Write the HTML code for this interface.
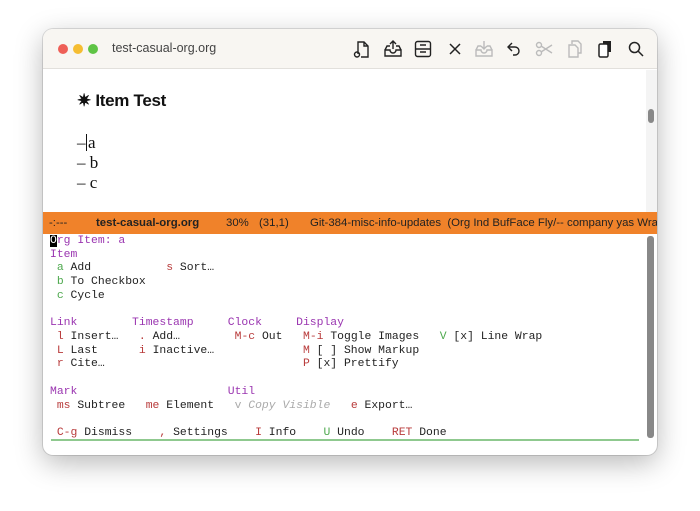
<!DOCTYPE html>
<html><head><style>
*{margin:0;padding:0;box-sizing:border-box}
body{width:700px;height:511px;background:#fff;position:relative;overflow:hidden;font-family:"Liberation Sans",sans-serif}
.win{position:absolute;left:43px;top:29px;width:614px;height:426px;border-radius:10px;background:#fff;box-shadow:0 8px 28px rgba(0,0,0,.28),0 0 0 1px rgba(0,0,0,.12);overflow:hidden}
.tb{position:absolute;left:0;top:0;width:614px;height:40px;background:#f8f6f2;border-bottom:1px solid #e2e0dc}
.dot{position:absolute;top:15px;width:10px;height:10px;border-radius:50%}
.title{position:absolute;left:69px;top:12px;font-size:12.5px;color:#444}
.ic{position:absolute;top:10px}
.mono{font-family:"Liberation Mono",monospace;font-size:11.4px;line-height:13.72px;white-space:pre;color:#222}
.p{color:#9a35b0}.r{color:#b83a3a}.g{color:#4da84d}.gr{color:#aaa}
.ml span{position:absolute;top:0}
</style></head><body>
<div class="win">
<div class="tb">
<div class="dot" style="left:15px;background:#ee5f57"></div>
<div class="dot" style="left:30px;background:#f5bd32"></div>
<div class="dot" style="left:45px;background:#5fc445"></div>
<div class="title">test-casual-org.org</div>
<svg class="ic" style="left:309px" width="20" height="20" viewBox="0 0 20 20" fill="none" stroke="#222" stroke-width="1.4"><path d="M6 15V3h6l4 4v11H9"/><path d="M12 3v4h4"/><circle cx="5" cy="15.5" r="2.5"/></svg>
<svg class="ic" style="left:340px" width="20" height="20" viewBox="0 0 20 20" fill="none" stroke="#222" stroke-width="1.4"><path d="M2 11l2-4h3M18 11l-2-4h-3M2 11v6h16v-6h-5a3 3 0 0 1-6 0z"/><path d="M10 10V2M7 5l3-3 3 3"/></svg>
<svg class="ic" style="left:370px" width="20" height="20" viewBox="0 0 20 20" fill="none" stroke="#222" stroke-width="1.4"><rect x="2.5" y="2.5" width="15" height="15" rx="2"/><path d="M2.5 10h15M7 6h6M7 13h6"/></svg>
<svg class="ic" style="left:402px" width="20" height="20" viewBox="0 0 20 20" fill="none" stroke="#222" stroke-width="1.5"><path d="M5 5l10 10M15 5L5 15"/></svg>
<svg class="ic" style="left:431px" width="20" height="20" viewBox="0 0 20 20" fill="none" stroke="#bbb" stroke-width="1.4"><path d="M2 11l2-4h3M18 11l-2-4h-3M2 11v6h16v-6h-5a3 3 0 0 1-6 0z"/><path d="M10 2v8M7 7l3 3 3-3"/></svg>
<svg class="ic" style="left:461px" width="20" height="20" viewBox="0 0 20 20" fill="none" stroke="#222" stroke-width="1.4"><path d="M8 4L4 8l4 4"/><path d="M4 8h7a4 4 0 0 1 0 8H9"/></svg>
<svg class="ic" style="left:491px" width="20" height="20" viewBox="0 0 20 20" fill="none" stroke="#bbb" stroke-width="1.4"><circle cx="5" cy="6" r="2.5"/><circle cx="5" cy="14" r="2.5"/><path d="M7 7l11 7M7 13l11-7"/></svg>
<svg class="ic" style="left:522px" width="20" height="20" viewBox="0 0 20 20" fill="none" stroke="#bbb" stroke-width="1.4"><path d="M7 5V2h6l3 3v9h-3"/><path d="M4 6h6l3 3v9H4z"/></svg>
<svg class="ic" style="left:552px" width="20" height="20" viewBox="0 0 20 20"><rect x="4" y="5" width="9" height="13" rx="1.5" fill="#fff" stroke="#222" stroke-width="1.5"/><path d="M8 2h8v11h-3V5H8z" fill="#222"/></svg>
<svg class="ic" style="left:583px" width="20" height="20" viewBox="0 0 20 20" fill="none" stroke="#222" stroke-width="1.5"><circle cx="8.5" cy="8.5" r="5"/><path d="M12 12l5 5"/></svg>
</div>
<div style="position:absolute;left:603px;top:41px;width:11px;height:142px;background:#f4f4f4"></div>
<div style="position:absolute;left:605px;top:80px;width:6px;height:14px;border-radius:3px;background:#888"></div>
<div style="position:absolute;left:34px;top:62px;font-size:17px;font-weight:bold;color:#111;letter-spacing:-0.3px">✷ Item Test</div>
<div style="position:absolute;left:34px;top:104px;font-family:'Liberation Serif',serif;font-size:17px;line-height:20px;color:#111">–<span style="display:inline-block;width:1.5px;height:17px;background:#111;vertical-align:-3px;margin-right:1px"></span>a<br>– b<br>– c</div>
<div class="ml" style="position:absolute;left:0;top:183px;width:614px;height:22px;background:#f0822a;font-size:11.4px;color:#222;line-height:22px;white-space:pre"><span style="left:6px">-:---</span><span style="left:53px;font-weight:bold">test-casual-org.org</span><span style="left:183px">30%</span><span style="left:216px">(31,1)</span><span style="left:267px">Git-384-misc-info-updates  (Org Ind BufFace Fly/-- company yas Wrap</span></div>
<div style="position:absolute;left:604px;top:207px;width:7px;height:202px;border-radius:3px;background:#888"></div>
<div class="mono" style="position:absolute;left:7px;top:206px"><span style="background:#000;color:#fff">O</span><span class="p">rg Item: a</span>
<span class="p">Item</span>
 <span class="g">a</span> Add           <span class="r">s</span> Sort…
 <span class="g">b</span> To Checkbox
 <span class="g">c</span> Cycle

<span class="p">Link</span>        <span class="p">Timestamp</span>     <span class="p">Clock</span>     <span class="p">Display</span>
 <span class="r">l</span> Insert…   <span class="r">.</span> Add…        <span class="r">M-c</span> Out   <span class="r">M-i</span> Toggle Images   <span class="g">V</span> [x] Line Wrap
 <span class="r">L</span> Last      <span class="r">i</span> Inactive…             <span class="r">M</span> [ ] Show Markup
 <span class="r">r</span> Cite…                             <span class="r">P</span> [x] Prettify

<span class="p">Mark</span>                      <span class="p">Util</span>
 <span class="r">ms</span> Subtree   <span class="r">me</span> Element   <span class="gr">v <i>Copy Visible</i></span>   <span class="r">e</span> Export…

 <span class="r">C-g</span> Dismiss    <span class="r">,</span> Settings    <span class="r">I</span> Info    <span class="g">U</span> Undo    <span class="r">RET</span> Done</div>
<div style="position:absolute;left:8px;top:410px;width:588px;height:1.5px;background:#8fc98f"></div>
</div>
</body></html>
